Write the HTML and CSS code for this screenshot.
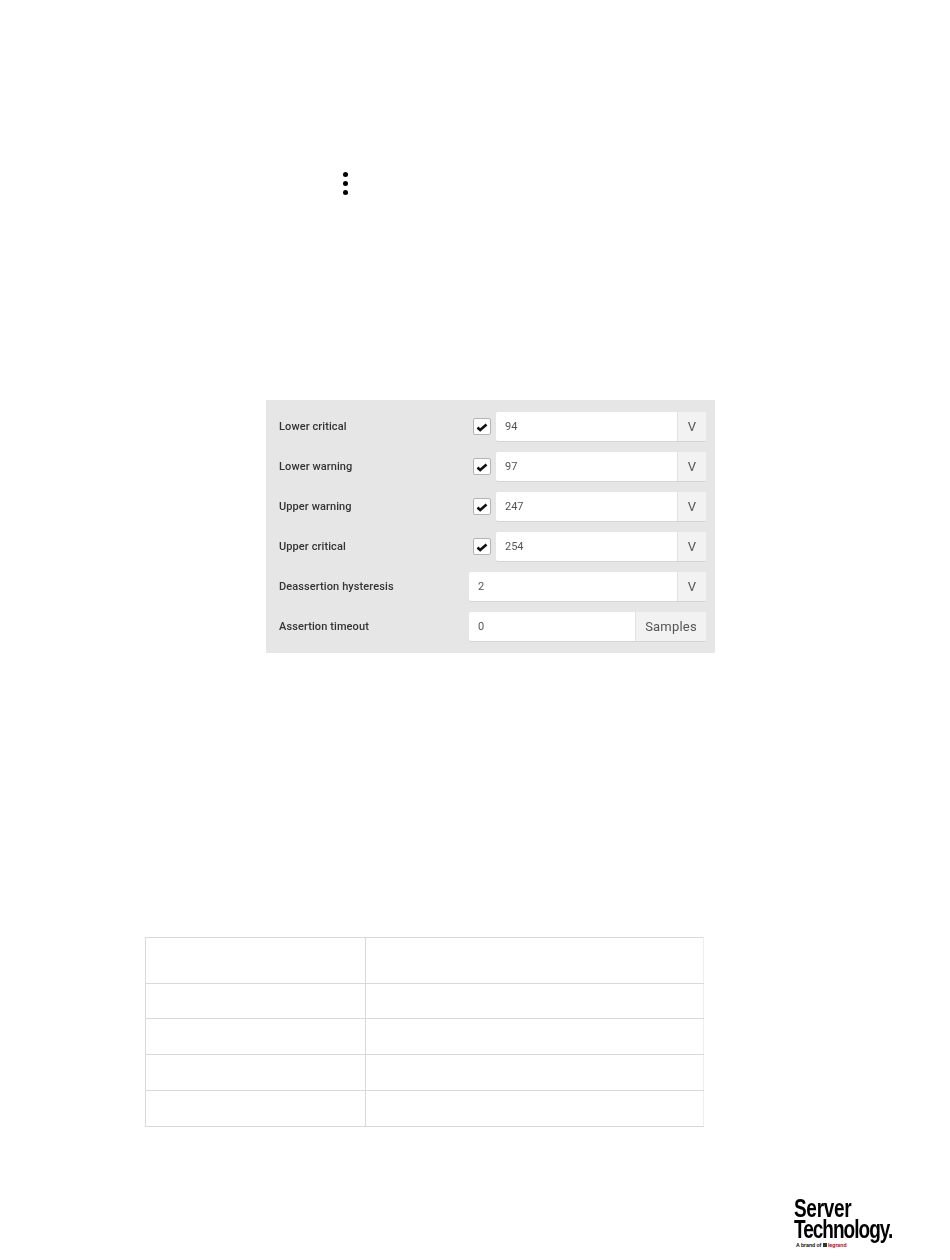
FILE: index.html
```html
<!DOCTYPE html>
<html lang="en">
  <head>
    <meta charset="UTF-8" />
    <title>Thresholds</title>
    <link rel="stylesheet" href="styles.css">
  </head>
  <body>
    <div class="page">
      <!-- more menu icon -->
      <div class="dots"><span></span><span></span><span></span></div>

      <!-- threshold settings -->
      <div class="panel">
        <div class="row">
          <span class="label">Lower critical</span>
          <span class="check"><svg width="12" height="10" viewBox="0 0 12 10"><path d="M1.5 5.5 4.2 8 10.5 2.6" fill="none" stroke="#111" stroke-width="2.6"/></svg></span>
          <div class="field short"><span class="value">94</span><span class="unit">V</span></div>
        </div>
        <div class="row">
          <span class="label">Lower warning</span>
          <span class="check"><svg width="12" height="10" viewBox="0 0 12 10"><path d="M1.5 5.5 4.2 8 10.5 2.6" fill="none" stroke="#111" stroke-width="2.6"/></svg></span>
          <div class="field short"><span class="value">97</span><span class="unit">V</span></div>
        </div>
        <div class="row">
          <span class="label">Upper warning</span>
          <span class="check"><svg width="12" height="10" viewBox="0 0 12 10"><path d="M1.5 5.5 4.2 8 10.5 2.6" fill="none" stroke="#111" stroke-width="2.6"/></svg></span>
          <div class="field short"><span class="value">247</span><span class="unit">V</span></div>
        </div>
        <div class="row">
          <span class="label">Upper critical</span>
          <span class="check"><svg width="12" height="10" viewBox="0 0 12 10"><path d="M1.5 5.5 4.2 8 10.5 2.6" fill="none" stroke="#111" stroke-width="2.6"/></svg></span>
          <div class="field short"><span class="value">254</span><span class="unit">V</span></div>
        </div>
        <div class="row">
          <span class="label">Deassertion hysteresis</span>
          <div class="field"><span class="value">2</span><span class="unit">V</span></div>
        </div>
        <div class="row">
          <span class="label">Assertion timeout</span>
          <div class="field"><span class="value">0</span><span class="unit wide">Samples</span></div>
        </div>
      </div>

      <!-- empty table -->
      <table class="grid">
        <tr class="head"><td></td><td></td></tr>
        <tr class="thin"><td></td><td></td></tr>
        <tr><td></td><td></td></tr>
        <tr><td></td><td></td></tr>
        <tr><td></td><td></td></tr>
      </table>

      <div class="logo">
        <div class="logo-line">Server</div>
        <div class="logo-line tight">Technology.</div>
        <div class="logo-brand">A brand of <i class="logo-mark"></i><b>legrand</b></div>
      </div>
    </div>
  </body>
</html>
```

FILE: styles.css
```css
body {
  margin: 0;
  background: #fff;
  font-family: Roboto, "Liberation Sans", sans-serif;
}

.page {
  height: 1260px;
  padding-top: 172px;
  box-sizing: border-box;
  overflow: hidden;
}

/* three dots */
.dots {
  display: flex;
  flex-direction: column;
  gap: 4px;
  width: 5px;
  margin-left: 343px;
}
.dots span {
  width: 5px;
  height: 5px;
  border-radius: 50%;
  background: #000;
}

/* threshold panel */
.panel {
  display: flex;
  flex-direction: column;
  gap: 11px;
  width: 449px;
  box-sizing: border-box;
  margin: 205px 0 0 266px;
  padding: 12px 9px 12px 13px;
  background: #e6e6e6;
  filter: blur(0.5px);
}
.row {
  display: flex;
  align-items: center;
  height: 29px;
}
.label {
  width: 190px;
  font-size: 11px;
  font-weight: 500;
  letter-spacing: 0.1px;
  color: #333;
}
.check {
  display: flex;
  align-items: center;
  justify-content: center;
  width: 18px;
  height: 17px;
  margin-left: 4px;
  margin-right: 5px;
  box-sizing: border-box;
  background: #fff;
  border: 1px solid #b5b5b5;
  border-radius: 2px;
}
.field {
  display: flex;
  flex: 1;
  height: 29px;
  background: #fff;
  border-radius: 2px;
  box-shadow: 0 1px 0 #d4d4d4;
  overflow: hidden;
}
.value {
  flex: 1;
  padding-left: 9px;
  font-size: 11px;
  line-height: 29px;
  color: #555;
}
.unit {
  width: 28px;
  text-align: center;
  font-size: 13px;
  line-height: 29px;
  color: #555;
  background: #f2f2f2;
  border-left: 1px solid #e2e2e2;
}
.unit.wide {
  width: 70px;
  font-size: 13px;
  letter-spacing: 0.2px;
}

/* table */
.grid {
  width: 559px;
  margin: 284px 0 0 145px;
  border-collapse: collapse;
  table-layout: fixed;
}
.grid td {
  height: 35px;
  padding: 0;
  border: 1px solid #d9d9d9;
}
.grid td:first-child {
  width: 219px;
}
.grid td:last-child {
  border-right-color: #eee;
}
.grid .head td {
  height: 45px;
}
.grid .thin td {
  height: 34px;
}

/* logo: no condensed face installed, so the wordmark is squeezed */
.logo {
  width: 100px;
  margin: 71px 0 0 794px;
  color: #000;
}
.logo-line {
  height: 21px;
  font-family: "Liberation Sans", sans-serif;
  font-size: 25px;
  line-height: 21px;
  font-weight: 700;
  letter-spacing: -0.4px;
  white-space: nowrap;
  transform: scaleX(0.76);
  transform-origin: left center;
}
.logo-line.tight {
  letter-spacing: -1.3px;
}
.logo-brand {
  display: flex;
  align-items: center;
  margin-top: 2px;
  margin-left: 2px;
  font-size: 5.5px;
  line-height: 6px;
  font-weight: 500;
  white-space: pre;
}
.logo-mark {
  width: 4px;
  height: 4px;
  margin-right: 1px;
  background: #333;
}
.logo-brand b {
  color: #c8102e;
}
```
